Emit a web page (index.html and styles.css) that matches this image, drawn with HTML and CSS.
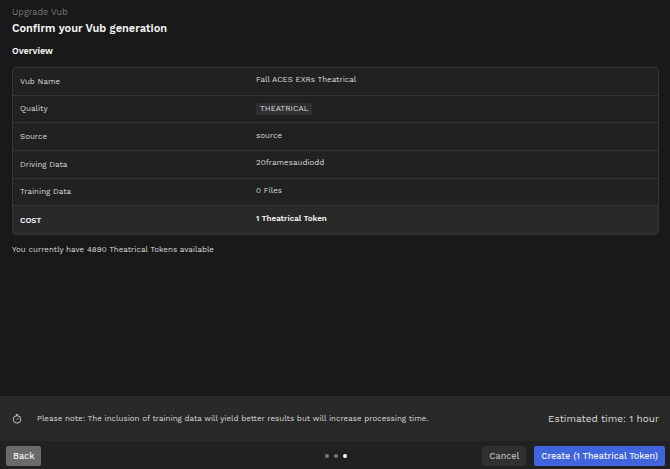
FILE: index.html
```
<!DOCTYPE html>
<html lang="en">
<head>
    <meta charset="utf-8">
    <title>Upgrade Vub</title>
    <link rel="stylesheet" href="styles.css">
</head>
<body>
    <main class="content">
        <p class="step-title">Upgrade Vub</p>
        <h1>Confirm your Vub generation</h1>
        <h2>Overview</h2>
        <table class="overview">
            <tr>
                <th scope="row">Vub Name</th>
                <td>Fall ACES EXRs Theatrical</td>
            </tr>
            <tr>
                <th scope="row">Quality</th>
                <td class="has-tag"><span class="tag">THEATRICAL</span></td>
            </tr>
            <tr>
                <th scope="row">Source</th>
                <td>source</td>
            </tr>
            <tr>
                <th scope="row">Driving Data</th>
                <td>20framesaudiodd</td>
            </tr>
            <tr>
                <th scope="row">Training Data</th>
                <td>0 Files</td>
            </tr>
            <tr class="cost">
                <th scope="row">COST</th>
                <td>1 Theatrical Token</td>
            </tr>
        </table>
        <p class="balance">You currently have 4890 Theatrical Tokens available</p>
    </main>

    <section class="notice">
        <svg class="timer" viewBox="0 0 24 24" fill="none" stroke="currentColor" stroke-width="2" aria-hidden="true">
            <circle cx="12" cy="13" r="9"/>
            <path d="M9 1.5h6M12 2v2M18.5 6.5l1.5-1.5M11.5 13.5l4-4"/>
        </svg>
        <p class="note">Please note: The inclusion of training data will yield better results but will increase processing time.</p>
        <p class="estimate">Estimated time: 1 hour</p>
    </section>

    <footer class="actions">
        <div>
            <button type="button" class="back">Back</button>
        </div>
        <div class="dots">
            <span class="dot"></span>
            <span class="dot"></span>
            <span class="dot active"></span>
        </div>
        <div class="right">
            <button type="button" class="cancel">Cancel</button>
            <button type="button" class="create">Create (1 Theatrical Token)</button>
        </div>
    </footer>
</body>
</html>
```
FILE: styles.css
```
* {
    box-sizing: border-box;
}
body {
    margin: 0;
    min-height: 100vh;
    display: flex;
    flex-direction: column;
    background-color: #191919;
    color: #dcdcdc;
    font-family: "Work Sans", Inter, sans-serif;
    font-size: 8px;
    line-height: 12px;
}
h1, h2, p {
    margin: 0;
}
.content {
    flex: 1;
    padding: 6px 11px 6px 12px;
}
.step-title {
    color: #777;
    font-size: 9px;
}
h1 {
    margin-top: 3px;
    color: #f5f5f5;
    font-size: 11px;
    font-weight: 600;
    line-height: 16px;
}
h2 {
    margin: 8px 0 10px;
    color: #f5f5f5;
    font-size: 9px;
    font-weight: 600;
}
.overview {
    width: 100%;
    height: 168px;
    table-layout: fixed;
    border: 1px solid #363636;
    border-radius: 4px;
    border-spacing: 0;
    overflow: hidden;
    background-color: #212121;
}
.overview th,
.overview td {
    height: 27px;
    padding: 1px 7px 0;
    border-bottom: 1px solid #363636;
    font-weight: 400;
    text-align: left;
    vertical-align: middle;
}
.overview th {
    width: 236px;
}
.overview td {
    padding-top: 0;
    padding-bottom: 2px;
}
.overview .has-tag {
    padding-bottom: 0;
}
.tag {
    display: inline-block;
    padding: 0 4px;
    border-radius: 2px;
    background-color: #303030;
}
.overview .cost th,
.overview .cost td {
    border-bottom: none;
    background-color: #292929;
    color: #f5f5f5;
    font-weight: 600;
}
.balance {
    margin-top: 9px;
}
.notice {
    display: flex;
    align-items: center;
    height: 45px;
    padding: 0 11px 0 12px;
    background-color: #292929;
}
.timer {
    width: 10px;
    height: 10px;
    margin-right: 15px;
}
.note {
    flex: 1;
}
.estimate {
    font-size: 10px;
}
.actions {
    display: grid;
    grid-template-columns: 1fr auto 1fr;
    align-items: center;
    height: 28px;
    padding: 1px 5px 0 6px;
    background-color: #212121;
}
.dots {
    display: flex;
    gap: 5px;
}
.dot {
    width: 4px;
    height: 4px;
    border-radius: 50%;
    background-color: #777;
}
.dot.active {
    background-color: #fff;
}
.right {
    display: flex;
    justify-content: flex-end;
    gap: 8px;
}
button {
    display: block;
    height: 20px;
    padding: 0 7px;
    border: none;
    border-radius: 2px;
    font-family: inherit;
    font-size: 9px;
    font-weight: 500;
    cursor: pointer;
}
.back {
    background-color: #6b6b6b;
    color: #f0f0f0;
}
.cancel {
    background-color: #303030;
    color: #b4b4b4;
}
.create {
    background-color: #4064dc;
    color: #f0f0fa;
}
```
